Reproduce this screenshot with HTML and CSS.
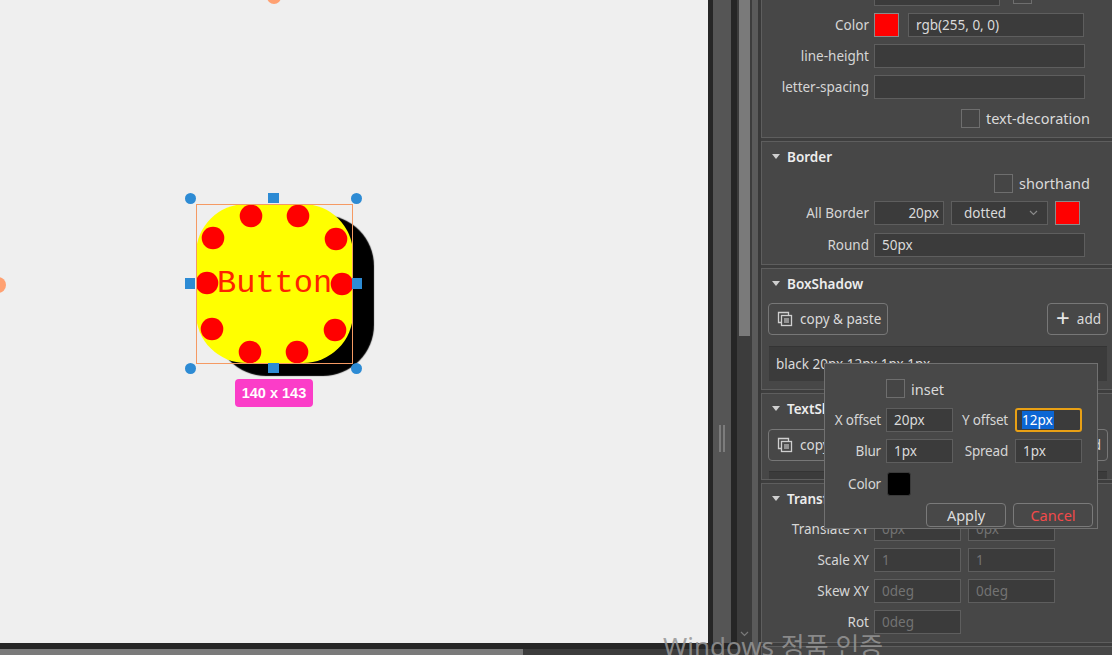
FILE: index.html
```html
<!DOCTYPE html>
<html lang="ko">
<head>
<meta charset="utf-8">
<title>Editor</title>
<link rel="stylesheet" href="styles.css">
</head>
<body>
<div class="app">
  <div class="left">
    <div class="work">
      <div class="canvas">
        <span class="guide guide-top"></span>
        <span class="guide guide-left"></span>
        <div class="widget">
          <span class="widget-text">Button</span>
          <svg class="dots" width="157" height="159" viewBox="0 0 157 159" fill="#ff0000">
            <circle cx="55" cy="12" r="11.3"/><circle cx="102" cy="12" r="11.3"/>
            <circle cx="17" cy="34" r="11.3"/><circle cx="140" cy="35" r="11.3"/>
            <circle cx="11" cy="79" r="11.3"/><circle cx="146" cy="80" r="11.3"/>
            <circle cx="16" cy="125" r="11.3"/><circle cx="139" cy="126" r="11.3"/>
            <circle cx="54" cy="148" r="11.3"/><circle cx="101" cy="148" r="11.3"/>
          </svg>
        </div>
        <div class="sel-rect"></div>
        <span class="h h-c h-tl"></span>
        <span class="h h-c h-tr"></span>
        <span class="h h-c h-bl"></span>
        <span class="h h-c h-br"></span>
        <span class="h h-sv h-tm"></span>
        <span class="h h-sv h-bm"></span>
        <span class="h h-sh h-lm"></span>
        <span class="h h-sh h-rm"></span>
        <div class="size-tag">140 x 143</div>
      </div>
      <div class="gutter g5"></div>
      <div class="splitter"><span class="grip"></span></div>
      <div class="gutter g6"></div>
    </div>
    <div class="hgap"></div>
    <div class="hscroll"><div class="hthumb"></div></div>
  </div>

  <div class="vscroll">
    <div class="vthumb"></div>
    <svg class="vchev" width="9" height="6" viewBox="0 0 9 6"><path d="M1 1l3.5 3.5L8 1" fill="none" stroke="#7a7a7a" stroke-width="1.2"/></svg>
  </div>
  <div class="strip-a"></div>
  <div class="strip-b"></div>

  <div class="panel">
    <div class="panel-content">
      <!-- Text section (scrolled) -->
      <section class="sec">
        <div class="body b-first">
          <div class="row">
            <span class="lbl">font-size</span>
            <input class="inp w126" value="">
            <span class="cb ml13"></span>
          </div>
          <div class="row">
            <span class="lbl">Color</span>
            <span class="swatch red"></span>
            <input class="inp w176 ml9" value="rgb(255, 0, 0)">
          </div>
          <div class="row">
            <span class="lbl">line-height</span>
            <input class="inp w211" value="">
          </div>
          <div class="row">
            <span class="lbl">letter-spacing</span>
            <input class="inp w211" value="">
          </div>
          <div class="row check mt2">
            <span class="cb"></span><span class="cb-lbl">text-decoration</span>
          </div>
        </div>
      </section>

      <!-- Border -->
      <section class="sec">
        <div class="sec-head"><span class="tri"></span>Border</div>
        <div class="body b-border">
          <div class="row check">
            <span class="cb"></span><span class="cb-lbl">shorthand</span>
          </div>
          <div class="row">
            <span class="lbl">All Border</span>
            <input class="inp w70 right" value="20px">
            <div class="select ml7"><span>dotted</span>
              <svg width="9" height="6" viewBox="0 0 9 6"><path d="M1 1l3.5 3.5L8 1" fill="none" stroke="#8a8a8a" stroke-width="1.2"/></svg>
            </div>
            <span class="swatch red ml7"></span>
          </div>
          <div class="row">
            <span class="lbl">Round</span>
            <input class="inp w211" value="50px">
          </div>
        </div>
      </section>

      <!-- BoxShadow -->
      <section class="sec">
        <div class="sec-head"><span class="tri"></span>BoxShadow</div>
        <div class="body b-shadow">
          <div class="btn-row">
            <button class="tbtn">
              <svg width="16" height="16" viewBox="0 0 16 16" fill="none" stroke="#cfcfcf" stroke-width="1.3"><path d="M4 11.5H1.5V1.5H11.5V4"/><rect x="4.5" y="4.5" width="10" height="10"/><path d="M7 7h5v5H7z" fill="#cfcfcf" stroke="none" opacity=".55"/></svg>
              copy &amp; paste
            </button>
            <button class="tbtn"><span class="plus">+</span>add</button>
          </div>
          <div class="list"><div class="item">black 20px 12px 1px 1px</div></div>
        </div>
      </section>

      <!-- TextShadow -->
      <section class="sec">
        <div class="sec-head"><span class="tri"></span>TextShadow</div>
        <div class="body b-tshadow">
          <div class="btn-row">
            <button class="tbtn">
              <svg width="16" height="16" viewBox="0 0 16 16" fill="none" stroke="#cfcfcf" stroke-width="1.3"><path d="M4 11.5H1.5V1.5H11.5V4"/><rect x="4.5" y="4.5" width="10" height="10"/><path d="M7 7h5v5H7z" fill="#cfcfcf" stroke="none" opacity=".55"/></svg>
              copy &amp; paste
            </button>
            <button class="tbtn"><span class="plus">+</span>add</button>
          </div>
          <div class="list empty"></div>
        </div>
      </section>

      <!-- Transform -->
      <section class="sec">
        <div class="sec-head"><span class="tri"></span>Transform</div>
        <div class="body b-transform">
          <div class="row">
            <span class="lbl">Translate XY</span>
            <input class="inp w87" placeholder="0px">
            <input class="inp w87 ml7" placeholder="0px">
          </div>
          <div class="row">
            <span class="lbl">Scale XY</span>
            <input class="inp w87" placeholder="1">
            <input class="inp w87 ml7" placeholder="1">
          </div>
          <div class="row">
            <span class="lbl">Skew XY</span>
            <input class="inp w87" placeholder="0deg">
            <input class="inp w87 ml7" placeholder="0deg">
          </div>
          <div class="row">
            <span class="lbl">Rot</span>
            <input class="inp w87" placeholder="0deg">
          </div>
        </div>
      </section>

      <section class="sec stub"></section>
    </div>
  </div>

  <!-- BoxShadow editor popup -->
  <div class="popup">
    <div class="p-inset"><span class="cb"></span><span class="cb-lbl">inset</span></div>
    <div class="p-grid">
      <span class="plbl">X offset</span>
      <input class="inp" value="20px">
      <span class="plbl second">Y offset</span>
      <div class="inp focus"><span class="selected">12px</span></div>
      <span class="plbl">Blur</span>
      <input class="inp" value="1px">
      <span class="plbl second">Spread</span>
      <input class="inp" value="1px">
    </div>
    <div class="p-color"><span class="plbl">Color</span><span class="swatch black"></span></div>
    <div class="p-actions">
      <button class="pbtn">Apply</button>
      <button class="pbtn cancel">Cancel</button>
    </div>
  </div>

  <div class="watermark">Windows 정품 인증</div>
</div>
</body>
</html>
```

FILE: styles.css
```css
html, body {
  margin: 0;
  padding: 0;
}
body {
  background: #262626;
  font-family: "Noto Sans", "Noto Sans CJK KR", sans-serif;
  font-size: 13.5px;
  color: #d6d6d6;
}
.app {
  position: relative;
  display: flex;
  width: 1112px;
  height: 655px;
  overflow: hidden;
}

/* ---------- left work area ---------- */
.left {
  width: 737px;
  flex: none;
  display: flex;
  flex-direction: column;
}
.work {
  display: flex;
  height: 643px;
}
.canvas {
  position: relative;
  width: 708px;
  flex: none;
  background: #efefef;
  overflow: hidden;
}
.gutter { background: #262626; flex: none; }
.g5 { width: 5px; }
.g6 { width: 6px; }
.splitter {
  width: 18px;
  flex: none;
  background: #555555;
  display: flex;
  justify-content: center;
  align-items: flex-start;
}
.grip {
  margin-top: 425px;
  width: 6px;
  height: 27px;
  border-left: 2px solid #7c7c7c;
  border-right: 2px solid #7c7c7c;
  box-sizing: border-box;
}
.hgap { height: 6px; background: #262626; }
.hscroll {
  height: 6px;
  background: #3c3c3c;
  display: flex;
}
.hthumb { width: 523px; background: #7a7a7a; }

.vscroll {
  width: 15px;
  flex: none;
  background: #3c3c3c;
  display: flex;
  flex-direction: column;
  align-items: center;
}
.vthumb {
  width: 11px;
  height: 336px;
  background: #7a7a7a;
}
.vchev { margin-top: auto; margin-bottom: 18px; }
.strip-a { width: 6px; flex: none; background: #5a5a5a; }
.strip-b { width: 3px; flex: none; background: #393939; }

/* ---------- canvas items ---------- */
.guide {
  position: absolute;
  border-radius: 50%;
  background: #ffa172;
}
.guide-top { left: 267px; top: -10px; width: 14px; height: 14px; }
.guide-left { left: -10px; top: 277px; width: 16px; height: 16px; }

.widget {
  position: absolute;
  left: 196px;
  top: 204px;
  width: 157px;
  height: 159px;
  box-sizing: border-box;
  padding-left: 21px;
  border-radius: 50px;
  background: #ffff00;
  box-shadow: 20px 12px 1px 1px #000;
  display: flex;
  align-items: center;
}
.widget-text {
  font-family: "Liberation Mono", monospace;
  font-size: 32px;
  color: #ff2200;
  white-space: nowrap;
}
.dots {
  position: absolute;
  left: 0;
  top: 0;
}
.sel-rect {
  position: absolute;
  left: 196px;
  top: 204px;
  width: 157px;
  height: 160px;
  box-sizing: border-box;
  border: 1px solid #f59a63;
}
.h { position: absolute; background: #2d8bd4; }
.h-c { width: 11px; height: 11px; border-radius: 50%; }
.h-sv { width: 11px; height: 10px; }
.h-sh { width: 10px; height: 11px; }
.h-tl { left: 185px; top: 193px; }
.h-tr { left: 351px; top: 193px; }
.h-bl { left: 185px; top: 363px; }
.h-br { left: 351px; top: 363px; }
.h-tm { left: 268px; top: 193px; }
.h-bm { left: 268px; top: 363px; }
.h-lm { left: 185px; top: 278px; }
.h-rm { left: 352px; top: 278px; }
.size-tag {
  position: absolute;
  left: 235px;
  top: 379px;
  width: 78px;
  height: 28px;
  border-radius: 4px;
  background: #fb3dc8;
  color: #fff;
  font-family: "Liberation Sans", Arial, sans-serif;
  font-weight: bold;
  font-size: 14.5px;
  display: flex;
  align-items: center;
  justify-content: center;
}

/* ---------- property panel ---------- */
.panel {
  flex: 1;
  background: #3e3e3e;
  overflow: hidden;
}
.panel-content {
  margin-top: -25px; /* scroll offset */
}
.sec {
  width: 356px;
  box-sizing: border-box;
  border: 1px solid #5e5e5e;
  background: #474747;
  margin-bottom: 3px;
}
.sec.stub { height: 40px; }
.sec-head {
  height: 29px;
  display: flex;
  align-items: center;
  padding-left: 10px;
  gap: 7px;
  font-weight: 600;
  color: #ededed;
}
.tri {
  width: 0;
  height: 0;
  border-left: 4px solid transparent;
  border-right: 4px solid transparent;
  border-top: 5px solid #cfcfcf;
}
.body {
  display: flex;
  flex-direction: column;
  gap: 7px;
}
.b-first { padding: 6px 0 9px; }
.b-border { padding: 2px 0 7px; gap: 8px; }
.b-shadow { padding: 5px 0 8px; }
.b-tshadow { padding: 6px 0 0; }
.b-transform { padding: 4px 0 8px; }

.row {
  display: flex;
  align-items: center;
  height: 24px;
}
.row.check {
  height: 20px;
  width: 328px;
  justify-content: flex-end;
}
.mt2 { margin-top: 2px; }
.lbl {
  width: 107px;
  flex: none;
  text-align: right;
  margin-right: 5px;
  color: #d6d6d6;
  white-space: nowrap;
}
.inp {
  height: 24px;
  box-sizing: border-box;
  margin: 0;
  border: 1px solid #5e5e5e;
  background: #3b3b3b;
  color: #dadada;
  font: inherit;
  padding: 0 7px;
  outline: none;
  flex: none;
}
.inp::placeholder { color: #737373; }
.inp.right { text-align: right; padding-right: 4px; }
.w70 { width: 70px; }
.w87 { width: 87px; }
.w126 { width: 126px; }
.w176 { width: 176px; }
.w211 { width: 211px; }
.ml7 { margin-left: 7px; }
.ml9 { margin-left: 9px; }
.ml13 { margin-left: 13px; }

.swatch {
  width: 25px;
  height: 24px;
  box-sizing: border-box;
  flex: none;
  border: 1px solid #8a8a8a;
}
.swatch.red { background: #ff0000; }
.swatch.black {
  width: 24px;
  background: #000;
  border: 1px solid #3a3a3a;
  border-radius: 3px;
}
.cb {
  width: 19px;
  height: 19px;
  box-sizing: border-box;
  flex: none;
  border: 1px solid #6e6e6e;
  background: #454545;
}
.cb-lbl {
  margin-left: 6px;
  font-size: 14.5px;
  color: #dadada;
}
.select {
  width: 97px;
  height: 24px;
  box-sizing: border-box;
  border: 1px solid #5e5e5e;
  background: #3b3b3b;
  display: flex;
  align-items: center;
  justify-content: space-between;
  padding: 0 9px 0 12px;
  color: #dadada;
}

.btn-row {
  display: flex;
  justify-content: space-between;
  padding: 0 8px 0 6px;
}
.tbtn {
  height: 32px;
  box-sizing: border-box;
  border: 1px solid #777;
  border-radius: 4px;
  background: transparent;
  color: #dadada;
  font: inherit;
  padding: 0 6px 0 8px;
  display: flex;
  align-items: center;
  gap: 7px;
}
.plus {
  font-size: 24px;
  line-height: 1;
  font-weight: 400;
  margin-top: -3px;
  color: #e6e6e6;
}
.list {
  margin: 4px 9px 0 7px;
  height: 35px;
  box-sizing: border-box;
  background: #3b3b3b;
  border-top: 1px solid #343434;
}
.list.empty {
  height: 8px;
  margin-top: 3px;
}
.item {
  padding: 8px 0 0 7px;
  color: #dadada;
}

/* ---------- popup ---------- */
.popup {
  position: absolute;
  left: 824px;
  top: 363px;
  width: 274px;
  height: 166px;
  box-sizing: border-box;
  border: 1px solid #717171;
  background: #484848;
  padding-top: 15px;
}
.p-inset {
  display: flex;
  align-items: center;
  height: 19px;
  padding-left: 61px;
}
.p-grid {
  margin-top: 10px;
  display: grid;
  grid-template-columns: 56px 67px 52px 67px;
  grid-auto-rows: 24px;
  column-gap: 5px;
  row-gap: 7px;
  align-items: center;
}
.p-grid .inp { width: 67px; }
.plbl {
  text-align: right;
  white-space: nowrap;
  color: #d6d6d6;
  letter-spacing: -0.2px;
}
.plbl.second { padding-right: 2px; }
.inp.focus {
  border: 2px solid #e8a015;
  border-radius: 3px;
  padding: 0 0 0 5px;
  display: flex;
  align-items: center;
}
.selected {
  background: #0b66d4;
  color: #fff;
  line-height: 18px;
  padding-right: 1px;
}
.p-color {
  margin-top: 9px;
  display: grid;
  grid-template-columns: 56px 24px;
  column-gap: 6px;
  align-items: center;
  height: 24px;
}
.p-actions {
  margin-top: 7px;
  display: flex;
  justify-content: flex-end;
  gap: 7px;
  padding-right: 4px;
}
.pbtn {
  width: 80px;
  height: 24px;
  box-sizing: border-box;
  border: 1px solid #7a7a7a;
  border-radius: 4px;
  background: #484848;
  color: #dcdcdc;
  font: inherit;
  font-size: 14.5px;
  padding: 0;
}
.pbtn.cancel { color: #f24a4a; }

/* ---------- OS watermark ---------- */
.watermark {
  position: absolute;
  left: 663px;
  top: 631px;
  font-family: "Noto Sans", "Noto Sans CJK KR", sans-serif;
  font-size: 26px;
  line-height: 30px;
  color: rgba(150, 150, 150, 0.85);
  white-space: nowrap;
  pointer-events: none;
}
```
